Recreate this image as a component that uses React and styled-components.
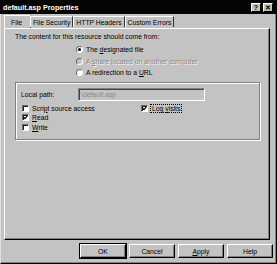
import React from 'react';
import styled, { createGlobalStyle } from 'styled-components';

const GlobalStyle = createGlobalStyle`
  html, body {
    margin: 0;
    padding: 0;
    background: #c3c3c3;
  }
  body {
    font-family: "Liberation Sans", Arial, sans-serif;
    font-size: 6.8px;
    color: #000;
  }
`;

const Window = styled.div`
  width: 277px;
  height: 264px;
  box-sizing: border-box;
  background: #c3c3c3;
  border-left: 1px solid #dfdfdf;
  border-right: 1px solid #000;
  border-bottom: 1px solid #000;
  box-shadow: inset -1px -1px 0 #808080;
  display: flex;
  flex-direction: column;
`;

const TitleBar = styled.div`
  height: 14px;
  margin-left: -1px;
  background: #050505;
  color: #fff;
  display: flex;
  align-items: center;
  padding: 0 3px 0 3px;
  font-weight: bold;
  font-size: 7.2px;
`;

const Title = styled.div`
  flex: 1;
`;

const CaptionButton = styled.div`
  width: 10px;
  height: 9px;
  box-sizing: border-box;
  background: #c3c3c3;
  color: #000;
  border-top: 1px solid #fff;
  border-left: 1px solid #fff;
  border-right: 1px solid #000;
  border-bottom: 1px solid #000;
  font-size: 7px;
  line-height: 7px;
  text-align: center;
  margin-left: ${p => (p.$gap ? '2px' : '0')};
`;

const TabStrip = styled.div`
  display: flex;
  align-items: flex-end;
  height: 14px;
  padding-left: 5px;
  position: relative;
  z-index: 1;
`;

const Tab = styled.div`
  box-sizing: border-box;
  height: ${p => (p.$active ? '13px' : '11px')};
  padding: ${p => (p.$active ? '0 8px 0 6px' : '0 2px')};
  margin: ${p => (p.$active ? '0 -1px 0 -2px' : '0 0 1px 0')};
  display: flex;
  align-items: center;
  background: #c3c3c3;
  border-top: 1px solid #fff;
  border-left: 1px solid #fff;
  border-right: 1px solid #303030;
  white-space: nowrap;
`;

const Panel = styled.div`
  margin: 0 6px 0 3px;
  height: 212px;
  box-sizing: border-box;
  border-top: 1px solid #fff;
  border-left: 1px solid #fff;
  border-right: 1px solid #000;
  border-bottom: 1px solid #000;
  box-shadow: inset -1px -1px 0 #808080;
  padding: 3px 0 0 10px;
  display: flex;
  flex-direction: column;
`;

const Intro = styled.div`
  height: 9px;
  line-height: 9px;
`;

const RadioList = styled.div`
  margin: 3px 0 0 61px;
  display: flex;
  flex-direction: column;
`;

const RadioRow = styled.div`
  height: 11.5px;
  display: flex;
  align-items: center;
  color: ${p => (p.$disabled ? '#8a8a8a' : '#000')};
  text-shadow: ${p => (p.$disabled ? '1px 1px 0 #f4f4f4' : 'none')};
`;

const RadioDot = styled.span`
  width: 7px;
  height: 7px;
  box-sizing: border-box;
  border-radius: 50%;
  background: ${p => (p.$disabled ? '#c3c3c3' : '#fff')};
  border: 1px solid;
  border-color: #6a6a6a #fff #fff #6a6a6a;
  margin-right: 3px;
  display: flex;
  align-items: center;
  justify-content: center;
  &::after {
    content: '';
    width: 3px;
    height: 3px;
    border-radius: 50%;
    background: ${p => (p.$checked ? '#000' : 'transparent')};
  }
`;

const Key = styled.span`
  text-decoration: underline;
`;

const Group = styled.div`
  margin: 3px 9px 0 0;
  height: 58px;
  box-sizing: border-box;
  border: 1px solid #808080;
  box-shadow: 1px 1px 0 #fff, inset 1px 1px 0 #fff;
  padding: 5px 0 0 5px;
  display: flex;
  flex-direction: column;
`;

const PathRow = styled.div`
  display: flex;
  align-items: center;
  height: 13px;
`;

const PathLabel = styled.div`
  width: 57px;
`;

const PathInput = styled.div`
  width: 127px;
  height: 13px;
  box-sizing: border-box;
  border-top: 1px solid #808080;
  border-left: 1px solid #808080;
  border-right: 1px solid #fff;
  border-bottom: 1px solid #fff;
  box-shadow: inset 1px 1px 0 #404040;
  color: #8a8a8a;
  padding: 0 2px;
  line-height: 11px;
`;

const Checks = styled.div`
  margin-top: 3px;
  padding-left: 1px;
  display: grid;
  grid-template-columns: 119px auto;
  grid-auto-rows: 9.5px;
`;

const CheckRow = styled.div`
  display: flex;
  align-items: center;
`;

const Box = styled.span`
  width: 7px;
  height: 7px;
  box-sizing: border-box;
  background: #fff;
  border-top: 1px solid #6a6a6a;
  border-left: 1px solid #6a6a6a;
  border-right: 1px solid #fff;
  border-bottom: 1px solid #fff;
  box-shadow: inset 1px 1px 0 #202020;
  margin-right: 3px;
  display: flex;
  align-items: center;
  justify-content: center;
`;

const Focus = styled.span`
  outline: 1px dotted #000;
  padding: 0 1px;
`;

const ButtonRow = styled.div`
  display: flex;
  justify-content: flex-end;
  gap: 3px;
  margin-top: 4px;
  padding-right: 3px;
`;

const Button = styled.div`
  width: 46px;
  height: 14px;
  box-sizing: border-box;
  display: flex;
  align-items: center;
  justify-content: center;
  border-top: 1px solid #fff;
  border-left: 1px solid #fff;
  border-right: 1px solid #000;
  border-bottom: 1px solid #000;
  box-shadow: inset -1px -1px 0 #808080;
  outline: ${p => (p.$default ? '1px solid #000' : 'none')};
`;

const Tick = () => (
  <svg width="5" height="5" viewBox="0 0 5 5">
    <path d="M0.5 2 L2 3.6 L4.6 0.6" fill="none" stroke="#000" strokeWidth="1.2" />
  </svg>
);

const Check = ({ checked, children }) => (
  <CheckRow>
    <Box>{checked && <Tick />}</Box>
    {children}
  </CheckRow>
);

export default function App() {
  return (
    <>
      <GlobalStyle />
      <Window>
        <TitleBar>
          <Title>default.asp Properties</Title>
          <CaptionButton>?</CaptionButton>
          <CaptionButton $gap>✕</CaptionButton>
        </TitleBar>
        <TabStrip>
          <Tab $active>File</Tab>
          <Tab>File Security</Tab>
          <Tab>HTTP Headers</Tab>
          <Tab>Custom Errors</Tab>
        </TabStrip>
        <Panel>
          <Intro>The content for this resource should come from:</Intro>
          <RadioList>
            <RadioRow>
              <RadioDot $checked />
              <span>The <Key>d</Key>esignated file</span>
            </RadioRow>
            <RadioRow $disabled>
              <RadioDot $disabled />
              <span>A <Key>s</Key>hare located on another computer</span>
            </RadioRow>
            <RadioRow>
              <RadioDot />
              <span>A redirection to a <Key>U</Key>RL</span>
            </RadioRow>
          </RadioList>
          <Group>
            <PathRow>
              <PathLabel>Local path:</PathLabel>
              <PathInput>\default.asp</PathInput>
            </PathRow>
            <Checks>
              <Check>Scri<Key>p</Key>t source access</Check>
              <Check checked><Focus>Log <Key>v</Key>isits</Focus></Check>
              <Check checked><Key>R</Key>ead</Check>
              <div />
              <Check><Key>W</Key>rite</Check>
            </Checks>
          </Group>
        </Panel>
        <ButtonRow>
          <Button $default>OK</Button>
          <Button>Cancel</Button>
          <Button><Key>A</Key>pply</Button>
          <Button>Help</Button>
        </ButtonRow>
      </Window>
    </>
  );
}
